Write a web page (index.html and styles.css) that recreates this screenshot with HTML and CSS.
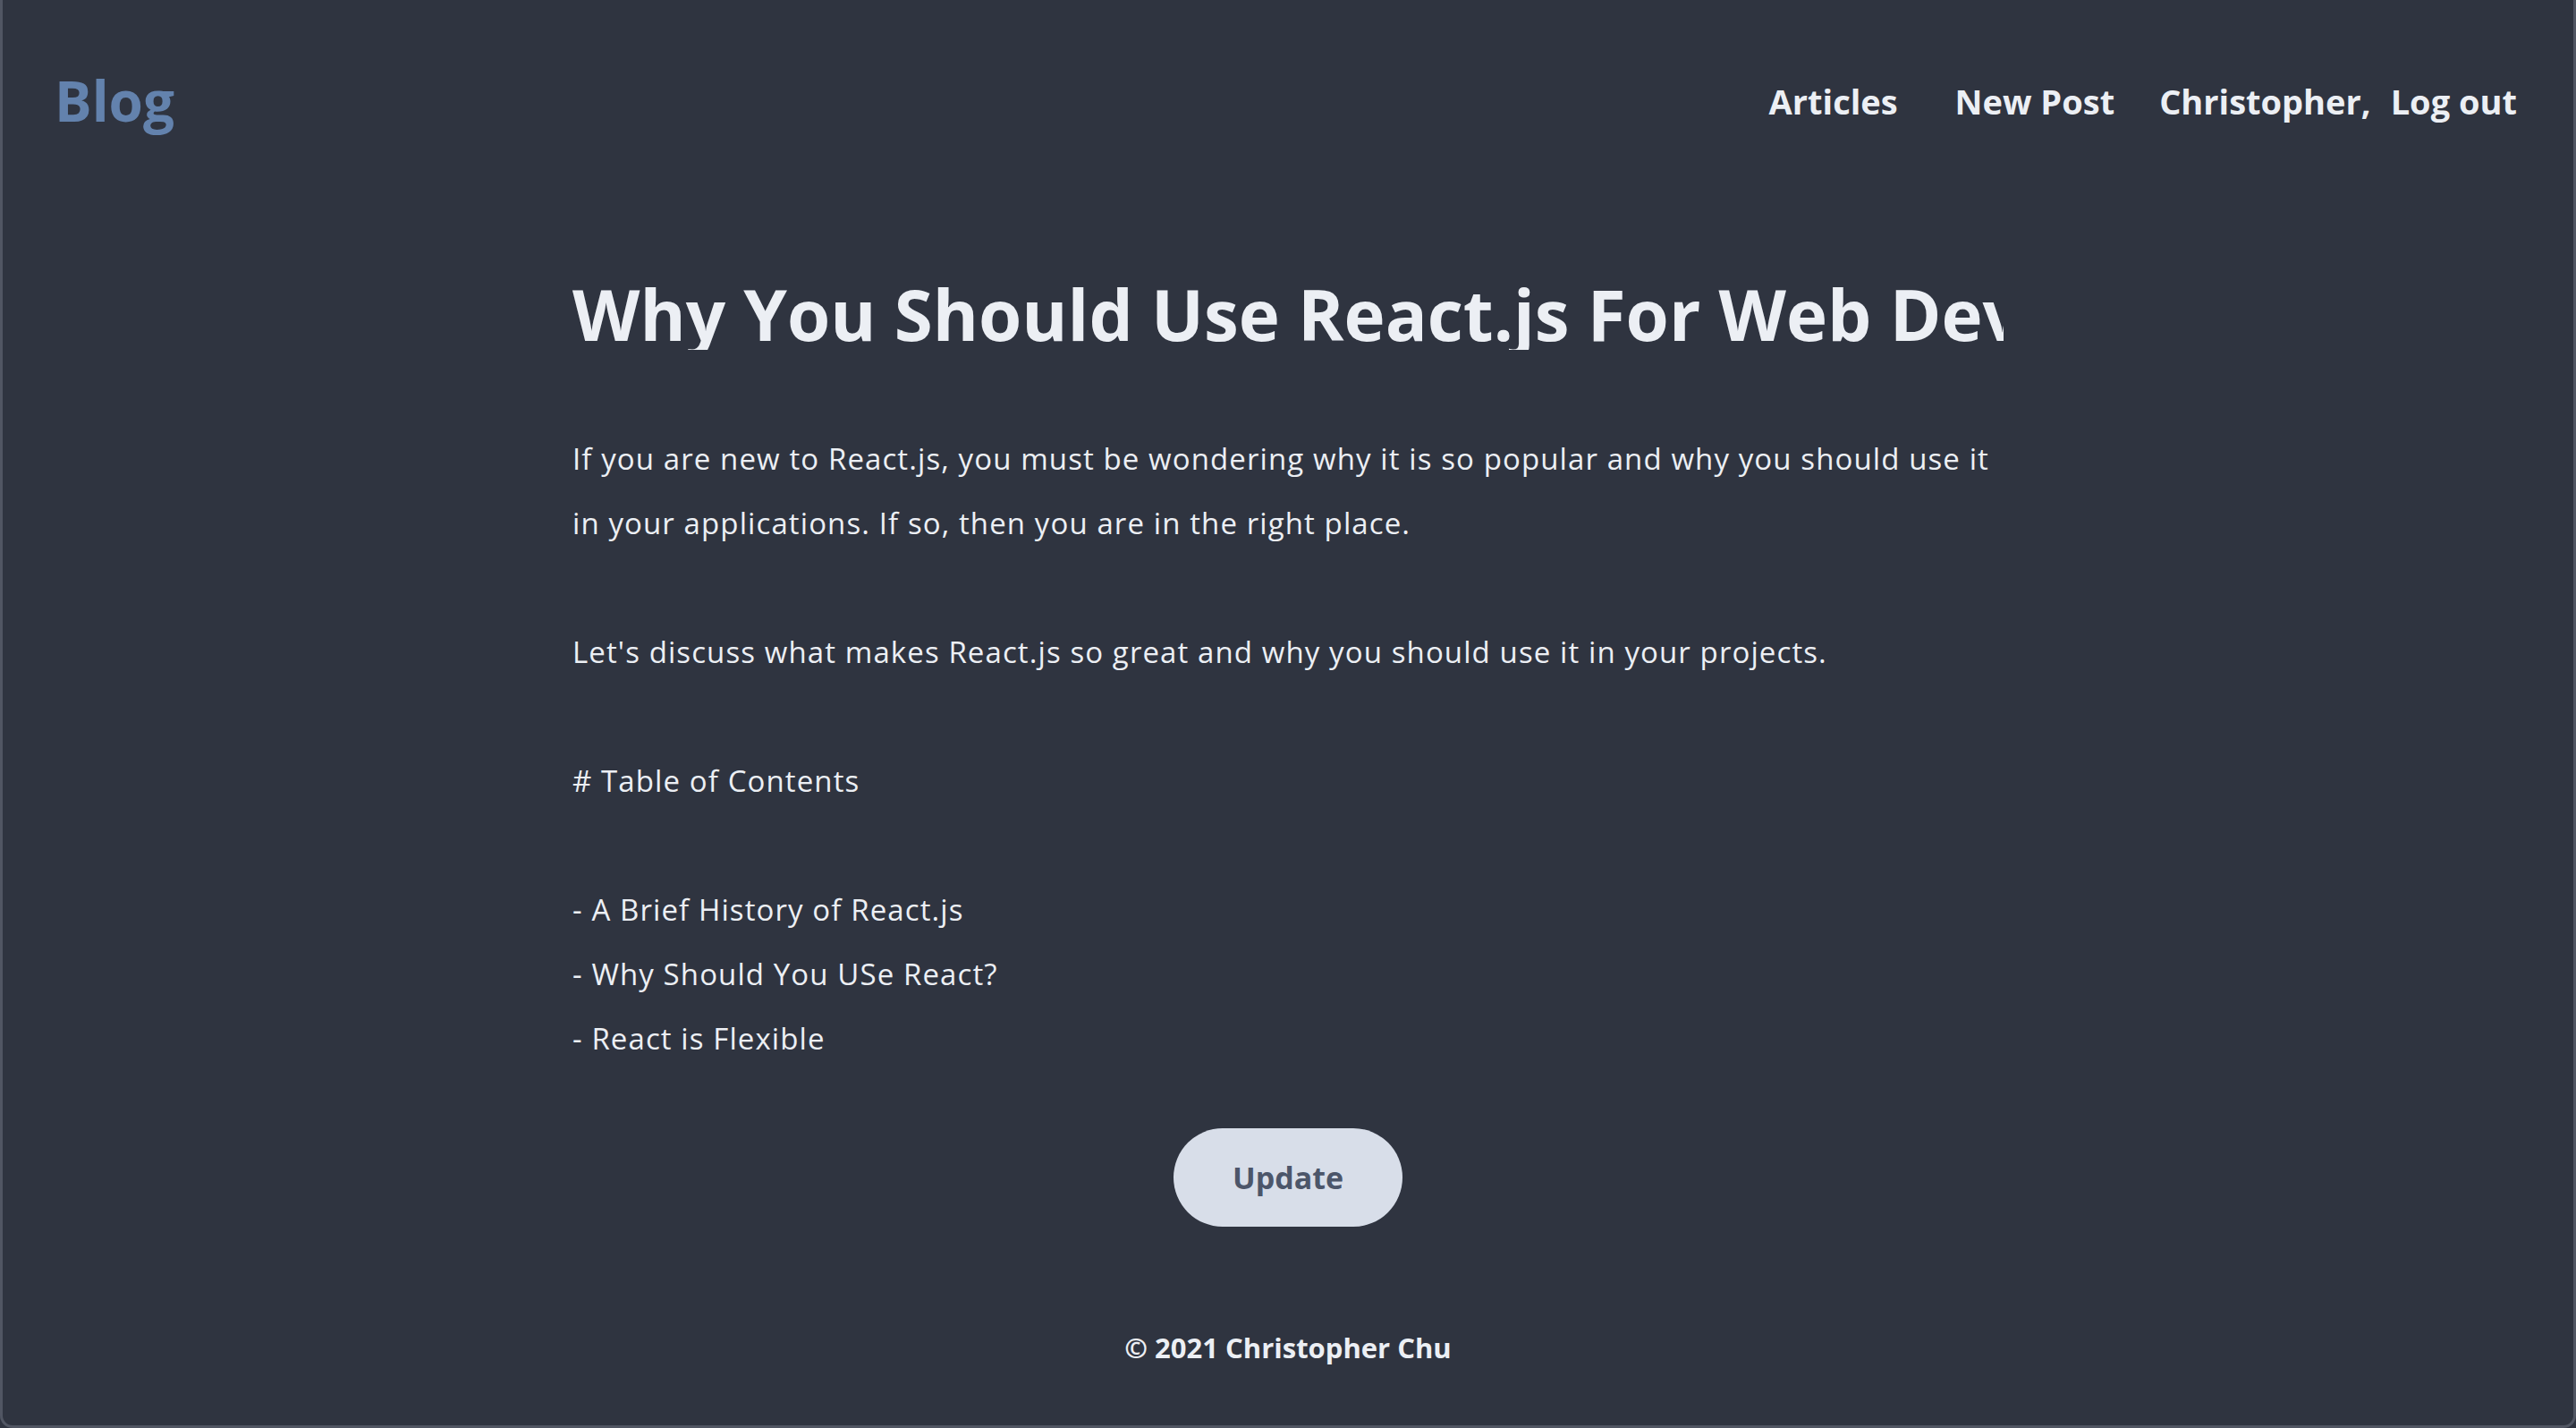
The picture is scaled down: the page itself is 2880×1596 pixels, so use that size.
FILE: index.html
```html
<!DOCTYPE html>
<html lang="en">
<head>
<meta charset="utf-8">
<title>Blog</title>
<link rel="stylesheet" href="styles.css">
</head>
<body>
<div class="page">
  <header class="header">
    <a class="logo" href="#">Blog</a>
    <nav class="nav">
      <a class="nav-link" href="#">Articles</a>
      <a class="nav-link nav-new" href="#">New Post</a>
      <span class="nav-user">Christopher,</span>
      <a class="nav-link nav-logout" href="#">Log out</a>
    </nav>
  </header>
  <main class="main">
    <div class="title">Why You Should Use React.js For Web Development</div>
    <div class="content">
      <div class="line">If you are new to React.js, you must be wondering why it is so popular and why you should use it</div>
      <div class="line">in your applications. If so, then you are in the right place.</div>
      <div class="line blank"></div>
      <div class="line">Let's discuss what makes React.js so great and why you should use it in your projects.</div>
      <div class="line blank"></div>
      <div class="line"># Table of Contents</div>
      <div class="line blank"></div>
      <div class="line">- A Brief History of React.js</div>
      <div class="line">- Why Should You USe React?</div>
      <div class="line">- React is Flexible</div>
    </div>
    <button class="btn" type="button">Update</button>
  </main>
  <footer class="footer">© 2021 Christopher Chu</footer>
</div>
</body>
</html>
```
FILE: styles.css
```css
html, body {
  margin: 0;
  padding: 0;
  background: #2f3440;
}
body {
  font-family: "Open Sans", "Noto Sans", sans-serif;
  color: #eceff4;
}
.page {
  box-sizing: border-box;
  height: 1596px;
  border: 3px solid #515663;
  border-top: 0;
  border-radius: 0 0 14px 14px;
  background: #2f3440;
  display: flex;
  flex-direction: column;
}
.header {
  display: flex;
  justify-content: space-between;
  align-items: flex-start;
  padding: 81px 63px 0 58px;
}
.logo {
  font-size: 62px;
  line-height: 62px;
  font-weight: 700;
  color: #6382ad;
  text-decoration: none;
}
.nav {
  display: flex;
  align-items: flex-start;
  margin-top: 13px;
}
.nav-link, .nav-user {
  font-size: 38px;
  line-height: 38px;
  font-weight: 700;
  color: #eceff4;
  text-decoration: none;
}
.nav-new { margin-left: 64px; }
.nav-user { margin-left: 50px; }
.nav-logout { margin-left: 22px; }
.main {
  display: flex;
  flex-direction: column;
  align-items: center;
}
.title {
  width: 1600px;
  margin-top: 168px;
  font-size: 78px;
  line-height: 80px;
  font-weight: 700;
  white-space: nowrap;
  overflow: hidden;
  color: #eceff4;
}
.content {
  width: 1600px;
  margin-top: 86px;
  font-size: 33px;
  letter-spacing: 1.1px;
  line-height: 72px;
  color: #eceff4;
}
.line {
  height: 72px;
  white-space: nowrap;
}
.btn {
  margin-top: 64px;
  width: 256px;
  height: 110px;
  border: 0;
  border-radius: 55px;
  background: #d8dee9;
  color: #4c566a;
  font-family: "Open Sans", "Noto Sans", sans-serif;
  font-size: 34px;
  font-weight: 700;
  padding: 0;
}
.footer {
  margin-top: 120px;
  text-align: center;
  font-size: 31px;
  line-height: 31px;
  font-weight: 700;
  color: #eceff4;
}
```
